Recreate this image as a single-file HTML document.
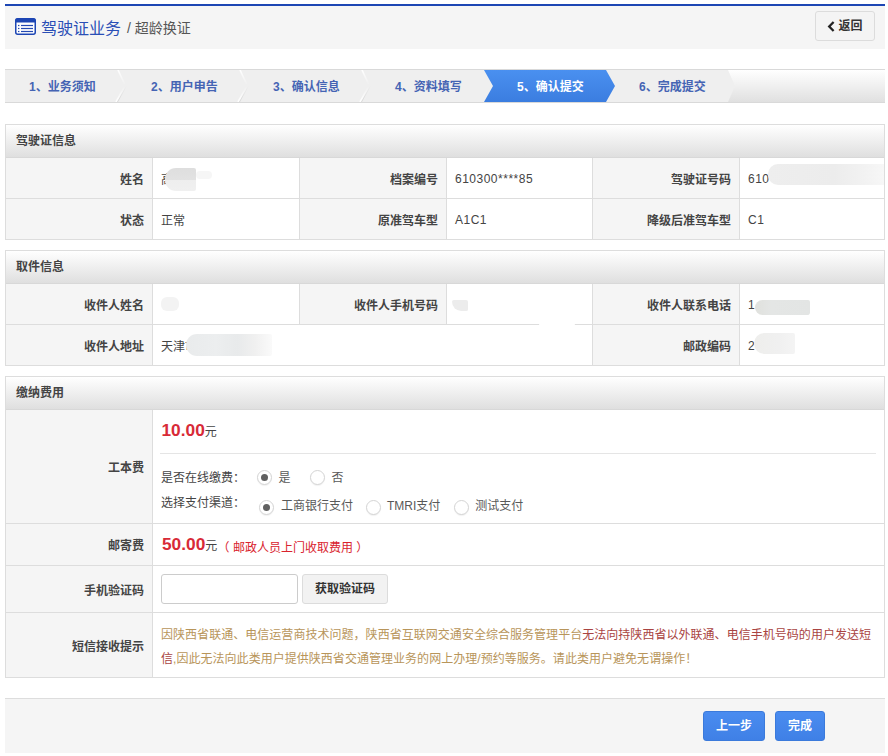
<!DOCTYPE html>
<html lang="zh-CN">
<head>
<meta charset="utf-8">
<title>驾驶证业务 / 超龄换证</title>
<style>
*{box-sizing:border-box;margin:0;padding:0}
html,body{width:888px;height:756px;background:#fff;overflow:hidden}
body{position:relative;font-family:"Liberation Sans","Noto Sans CJK SC",sans-serif;font-size:12px;color:#444}
.abs{position:absolute}
/* header */
#hd{left:5px;top:4px;width:880px;height:45px;border-top:2px solid #1d46b4;background:#f5f5f5}
#hd .ico{position:absolute;left:10px;top:12px}
#hd .t1{position:absolute;left:36px;top:11px;font-size:16px;line-height:24px;color:#2a4fb6;white-space:nowrap}
#hd .t2{position:absolute;left:122px;top:10px;font-size:14px;line-height:24px;color:#555;white-space:nowrap}
#back{left:815px;top:11px;width:60px;height:30px;border:1px solid #dcdcdc;border-radius:3px;background:#f4f4f4;font-size:12px;font-weight:bold;color:#333;line-height:28px;text-align:center;white-space:nowrap}
/* steps */
#steps{left:5px;top:69px;width:880px;height:34px;border-top:1px solid #d9d9d9;border-bottom:1px solid #d9d9d9;background:linear-gradient(#ffffff,#fdfdfd 6%,#e0e0e0)}
#steps .flat{position:absolute;left:0;top:0;width:722px;height:32px;background:#efefef}
.step{position:absolute;top:0;height:32px;width:122px;line-height:34px;font-size:12px;font-weight:bold;color:#4564b4;padding-left:24px;white-space:nowrap}
.step.on{color:#fff}
#steps svg{position:absolute;left:0;top:0}
/* panels */
.panel{left:5px;width:880px;border:1px solid #ddd;background:#fff;overflow:hidden}
.ph{height:33px;line-height:33px;padding-left:10px;font-weight:bold;color:#444;background:linear-gradient(#ffffff,#fdfdfd 6%,#dfdfdf);border-bottom:1px solid #d8d8d8;white-space:nowrap}
table{border-collapse:separate;border-spacing:0;width:878px;table-layout:fixed}
td{border-right:1px solid #ddd;border-bottom:1px solid #ddd;vertical-align:middle;font-size:12px;white-space:nowrap;position:relative}
tr:last-child td{border-bottom:0}
td:last-child{border-right:0}
td.l{background:#f5f5f5;text-align:right;padding-right:8px;font-weight:bold;color:#444}
td.v{padding-left:8px;color:#444}
.n{letter-spacing:.5px;position:relative;top:1px}
.red{color:#d82a37;font-weight:bold;font-size:17.3px}
.radio{display:inline-block;width:15px;height:15px;border:1px solid #d4d4d4;border-radius:50%;background:#fff;vertical-align:middle;position:relative;box-shadow:0 1px 1px rgba(0,0,0,.06)}
.radio.on:after{content:"";position:absolute;left:3px;top:3px;width:7px;height:7px;border-radius:50%;background:#606060}
.opt{color:#585858}
.smudge{position:absolute;background:#ececec;border-radius:6px;filter:blur(.6px)}
#ft{left:5px;top:698px;width:880px;height:55px;border-top:1px solid #ddd;background:#f5f5f5}
.btn{position:absolute;height:30px;border-radius:3px;background:linear-gradient(#4a8cf0,#3f80e6);border:1px solid #3b7adb;color:#fff;font-weight:bold;font-size:12px;line-height:28px;text-align:center;white-space:nowrap}
</style>
</head>
<body>

<div id="hd" class="abs">
  <svg class="ico" width="21" height="17" viewBox="0 0 21 17">
    <rect x="0.75" y="0.75" width="19.5" height="15.5" rx="2" ry="2" fill="#fff" stroke="#1d46b4" stroke-width="1.5"/>
    <path d="M0.2 4.6 V2.4 Q0.2 0.2 2.4 0.2 H18.6 Q20.8 0.2 20.8 2.4 V4.6 Z" fill="#1d46b4"/>
    <g fill="#2449b3">
      <rect x="3" y="6.9" width="1.4" height="1.2"/><rect x="6" y="6.9" width="12" height="1.2"/>
      <rect x="3" y="9.9" width="1.4" height="1.2"/><rect x="6" y="9.9" width="12" height="1.2"/>
      <rect x="3" y="12.9" width="1.4" height="1.2"/><rect x="6" y="12.9" width="12" height="1.2"/>
    </g>
  </svg>
  <span class="t1">驾驶证业务</span>
  <span class="t2">/ 超龄换证</span>
</div>
<div id="back" class="abs"><svg width="8" height="11" viewBox="0 0 8 11" style="vertical-align:-1.5px;margin-right:3px"><path d="M6.6 1 L2.2 5.5 L6.6 10" fill="none" stroke="#222" stroke-width="2.3"/></svg>返回</div>

<div id="steps" class="abs">
  <div class="flat"></div>
  <svg width="880" height="32" viewBox="0 0 880 32">
    <defs>
      <linearGradient id="ga" x1="0" y1="0" x2="0" y2="1"><stop offset="0" stop-color="#4a90f0"/><stop offset="1" stop-color="#3b7de0"/></linearGradient>
      <linearGradient id="gt" x1="0" y1="0" x2="0" y2="1"><stop offset="0" stop-color="#fff" stop-opacity="1"/><stop offset="1" stop-color="#fff" stop-opacity="0"/></linearGradient>
      <linearGradient id="gb" x1="0" y1="0" x2="0" y2="1"><stop offset="0" stop-color="#fff" stop-opacity="0"/><stop offset="1" stop-color="#fff" stop-opacity="1"/></linearGradient>
      <linearGradient id="gs" x1="0" y1="0" x2="0" y2="1"><stop offset="0" stop-color="#d8d8d8" stop-opacity="0"/><stop offset="1" stop-color="#d8d8d8" stop-opacity="1"/></linearGradient>
    </defs>
    <g fill="none" stroke-width="1.6">
      <path d="M113 0 L120 15" stroke="url(#gt)"/><path d="M120 16 L111 32" stroke="url(#gb)"/><path d="M121.5 16 L112.5 32" stroke="url(#gs)" stroke-width="1"/>
      <path d="M235 0 L242 15" stroke="url(#gt)"/><path d="M242 16 L233 32" stroke="url(#gb)"/><path d="M243.5 16 L234.5 32" stroke="url(#gs)" stroke-width="1"/>
      <path d="M357 0 L364 15" stroke="url(#gt)"/><path d="M364 16 L355 32" stroke="url(#gb)"/><path d="M365.5 16 L356.5 32" stroke="url(#gs)" stroke-width="1"/>
    </g>
    <path d="M479 0 L601 0 L610 16 L601 32 L479 32 L488 16 Z" fill="url(#ga)"/>
    <path d="M721 0 L723 0 L730 16 L723 32 L721 32 Z" fill="#efefef"/>
  </svg>
  <div class="step" style="left:0">1、业务须知</div>
  <div class="step" style="left:122px">2、用户申告</div>
  <div class="step" style="left:244px">3、确认信息</div>
  <div class="step" style="left:366px">4、资料填写</div>
  <div class="step on" style="left:488px">5、确认提交</div>
  <div class="step" style="left:610px">6、完成提交</div>
</div>

<div class="panel abs" style="top:124px;height:116px">
  <div class="ph">驾驶证信息</div>
  <table>
    <colgroup><col style="width:147px"><col style="width:147px"><col style="width:147px"><col style="width:146px"><col style="width:147px"><col></colgroup>
    <tr><td class="l" style="height:41px">姓名</td><td class="v">高<span class="smudge" style="left:12px;top:10px;width:31px;height:23px;border-radius:11px 2px 2px 11px;background:linear-gradient(#dedede 0,#e2e2e2 52%,#eeeeee 52%,#f0f0f0 100%)"></span><span class="smudge" style="left:43px;top:13px;width:16px;height:8px;background:#f6f6f6"></span></td><td class="l">档案编号</td><td class="v"><span class="n">610300****85</span></td><td class="l">驾驶证号码</td><td class="v"><span class="n">610</span><span class="smudge" style="left:28px;top:6px;width:120px;height:21px;border-radius:10px 4px 4px 10px;background:linear-gradient(90deg,#eeeeee 0,#ececec 55%,#f2f2f2 80%,#f8f8f8 100%)"></span></td></tr>
    <tr><td class="l" style="height:40px">状态</td><td class="v">正常</td><td class="l">原准驾车型</td><td class="v"><span class="n">A1C1</span></td><td class="l">降级后准驾车型</td><td class="v"><span class="n">C1</span></td></tr>
  </table>
</div>

<div class="panel abs" style="top:250px;height:116px">
  <div class="ph">取件信息</div>
  <table>
    <colgroup><col style="width:147px"><col style="width:147px"><col style="width:147px"><col style="width:146px"><col style="width:147px"><col></colgroup>
    <tr><td class="l" style="height:41px">收件人姓名</td><td class="v"><span class="smudge" style="left:8px;top:13px;width:18px;height:14px;background:#f3f3f3"></span></td><td class="l">收件人手机号码</td><td class="v"><span class="smudge" style="left:5px;top:16px;width:16px;height:11px;border-radius:2px 2px 2px 10px"></span><span class="smudge" style="left:92px;top:36px;width:36px;height:7px;background:#fff;z-index:2"></span></td><td class="l">收件人联系电话</td><td class="v"><span class="n">1</span><span class="smudge" style="left:15px;top:16px;width:55px;height:15px;border-radius:8px 2px 3px 8px;background:linear-gradient(90deg,#e0e1dd 0,#e4e6e5 30%,#e3e5e4 100%)"></span></td></tr>
    <tr><td class="l" style="height:40px">收件人地址</td><td class="v" colspan="3">天津市<span class="smudge" style="left:33px;top:9px;width:86px;height:22px;border-radius:11px 2px 2px 11px;background:linear-gradient(90deg,#e9ebec 0,#eceeef 35%,#e8eaeb 60%,#f0f0f0 80%,#fafafa 100%)"></span></td><td class="l">邮政编码</td><td class="v"><span class="n">2</span><span class="smudge" style="left:14px;top:8px;width:41px;height:21px;border-radius:11px 2px 2px 11px;background:linear-gradient(90deg,#eeeeec 0,#f0f0f0 60%,#f4f4f4 100%)"></span></td></tr>
  </table>
</div>

<div class="panel abs" style="top:376px;height:302px">
  <div class="ph">缴纳费用</div>
  <table>
    <colgroup><col style="width:147px"><col></colgroup>
    <tr><td class="l" style="height:114px">工本费</td><td class="v" style="vertical-align:top">
      <div style="height:44px;line-height:40px;border-bottom:1px solid #e5e5e5;margin-right:8px;margin-left:-1px;padding-left:1px"><span class="red" style="margin-left:.5px">10.00</span>元</div>
      <div style="height:28px;line-height:28px;margin-top:10px">是否在线缴费：<span class="radio on" style="margin-left:12px;top:-1px"></span><span class="opt" style="margin-left:6.5px">是</span><span class="radio" style="margin-left:19.5px;top:-1px"></span><span class="opt" style="margin-left:6.5px">否</span></div>
      <div style="height:28px;line-height:28px"><span style="position:relative;top:-3px">选择支付渠道：</span><span class="radio on" style="margin-left:14px;top:1px"></span><span class="opt" style="margin-left:7px">工商银行支付</span><span class="radio" style="margin-left:13px;top:1px"></span><span class="opt" style="margin-left:6px">TMRI支付</span><span class="radio" style="margin-left:14px;top:1px"></span><span class="opt" style="margin-left:6px">测试支付</span></div>
    </td></tr>
    <tr><td class="l" style="height:42px">邮寄费</td><td class="v"><span class="red" style="margin-left:1px">50.00</span>元 <span style="color:#d9232e;position:relative;top:2px;margin-left:-3px">（ 邮政人员上门收取费用 ）</span></td></tr>
    <tr><td class="l" style="height:47px">手机验证码</td><td class="v"><span style="display:inline-block;width:137px;height:30px;border:1px solid #ccc;border-radius:3px;background:#fff;vertical-align:middle"></span><span style="display:inline-block;margin-left:4px;width:86px;height:30px;border:1px solid #dcdcdc;border-radius:3px;background:#f2f2f2;vertical-align:middle;text-align:center;line-height:28px;font-weight:bold;color:#333">获取验证码</span></td></tr>
    <tr><td class="l" style="height:64px">短信接收提示</td><td class="v" style="white-space:normal;color:#b8955a;line-height:24px;padding-right:0;padding-top:3px;letter-spacing:.035px">因陕西省联通、电信运营商技术问题，陕西省互联网交通安全综合服务管理平台<span style="color:#a94442">无法向持陕西省以外联通、电信手机号码的用户发送短信</span>,因此无法向此类用户提供陕西省交通管理业务的网上办理/预约等服务。请此类用户避免无谓操作！</td></tr>
  </table>
</div>

<div id="ft" class="abs">
  <div class="btn" style="left:698px;top:12px;width:62px">上一步</div>
  <div class="btn" style="left:770px;top:12px;width:50px">完成</div>
</div>

</body>
</html>
